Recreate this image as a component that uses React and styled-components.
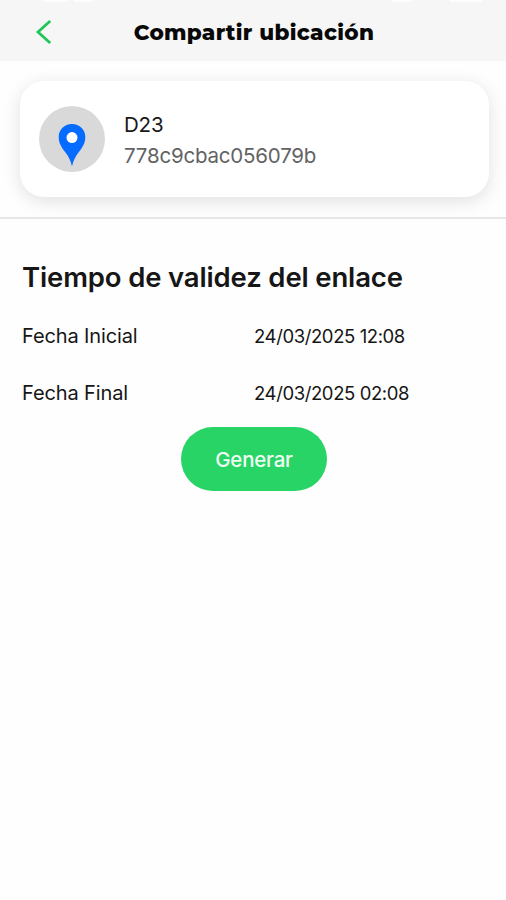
import React from 'react';
import styled, { createGlobalStyle } from 'styled-components';

const GlobalStyle = createGlobalStyle`
  *, *::before, *::after { box-sizing: border-box; }
  body { margin: 0; background: #fefefe; font-family: Inter, "Liberation Sans", sans-serif; }
`;

const Screen = styled.main`
  min-height: 900px;
  display: flex;
  flex-direction: column;
  background: #fefefe;
  color: #161616;
`;

const StatusBar = styled.div`
  display: flex;
  height: 3px;
  padding-left: 43px;
  background: #f6f6f6;
`;

const StatusItem = styled.span`
  width: ${(p) => p.$width}px;
  height: 2px;
  margin-right: ${(p) => p.$gap || 0}px;
  border-radius: 0 0 8px 8px;
  background: #fdfdfd;
`;

const Header = styled.header`
  display: grid;
  grid-template-columns: 87px 1fr 87px;
  align-items: center;
  height: 58px;
  background: #f6f6f6;
`;

const BackButton = styled.button`
  display: flex;
  justify-content: center;
  padding: 0;
  border: 0;
  background: none;
`;

const Title = styled.h1`
  margin: 0;
  padding-left: 2px;
  text-align: center;
  white-space: nowrap;
  font-family: Montserrat, Inter, sans-serif;
  font-size: 21.5px;
  line-height: 28px;
  font-weight: 800;
  letter-spacing: 0.32px;
  color: #080808;
`;

const DeviceSection = styled.section`
  height: 158px;
  padding: 20px 17px 0 20px;
  border-bottom: 2px solid #e7e7e7;
  overflow: hidden;
`;

const DeviceCard = styled.article`
  display: flex;
  align-items: center;
  gap: 19px;
  height: 116px;
  padding-left: 19px;
  border-radius: 24px;
  background: #fff;
  box-shadow: 0 4px 18px rgba(0, 0, 0, 0.12);
`;

const Avatar = styled.div`
  display: flex;
  align-items: center;
  justify-content: center;
  width: 66px;
  height: 66px;
  padding-top: 12px;
  border-radius: 50%;
  background: #d9d9d9;
`;

const DeviceText = styled.div`
  display: flex;
  flex-direction: column;
  padding-top: 1px;
`;

const DeviceLine = styled.span`
  font-size: 20.5px;
  line-height: 31px;
  letter-spacing: -0.2px;
  color: ${(p) => (p.$muted ? '#636363' : '#181818')};
`;

const Form = styled.section`
  display: flex;
  flex-direction: column;
  padding: 41px 22px 0;
`;

const Heading = styled.h2`
  margin: 0;
  font-size: 27.5px;
  line-height: 34px;
  font-weight: 600;
  letter-spacing: -0.15px;
  white-space: nowrap;
`;

const Rows = styled.div`
  padding-top: 13px;
`;

const Row = styled.div`
  display: grid;
  grid-template-columns: 232px 1fr;
  align-items: center;
  height: 57px;
`;

const Label = styled.span`
  font-size: 20px;
  line-height: 26px;
  letter-spacing: -0.12px;
`;

const DateValue = styled.span`
  font-size: 18.5px;
  line-height: 26px;
  letter-spacing: -0.4px;
`;

const GenerateButton = styled.button`
  align-self: center;
  width: 146px;
  height: 64px;
  margin: 6px 0 0 2px;
  padding: 2px 0 0;
  border: 0;
  border-radius: 32px;
  background: #29d466;
  color: #effff3;
  font: 500 20.5px/26px Inter, sans-serif;
  letter-spacing: -0.25px;
`;

function ChevronLeft() {
  return (
    <svg width="18" height="26" viewBox="0 0 18 26" fill="none" aria-hidden="true">
      <path d="M15.2 2 3 13 15.2 24" stroke="#1fc659" strokeWidth="2.8" />
    </svg>
  );
}

function Pin() {
  return (
    <svg width="28" height="43" viewBox="0 0 28 43" aria-hidden="true">
      <path d="M14 0C6.3 0 .7 5.6.7 13c0 6.500 3 10.500 6.800 15.500C10.600 32.500 12.900 37 14 42.500c1.100-5.500 3.400-10 6.500-14 3.800-5 6.800-9 6.800-15.500C27.300 5.600 21.700 0 14 0Z" fill="#066bff" />
      <circle cx="14" cy="13.600" r="5.500" fill="#fff" />
    </svg>
  );
}

export default function App() {
  return (
    <Screen>
      <GlobalStyle />
      <StatusBar>
        <StatusItem $width={25} $gap={5} />
        <StatusItem $width={20} $gap={299} />
        <StatusItem $width={20} $gap={37} />
        <StatusItem $width={34} />
      </StatusBar>
      <Header>
        <BackButton aria-label="Volver"><ChevronLeft /></BackButton>
        <Title>Compartir ubicación</Title>
      </Header>
      <DeviceSection>
        <DeviceCard>
          <Avatar><Pin /></Avatar>
          <DeviceText>
            <DeviceLine>D23</DeviceLine>
            <DeviceLine $muted>778c9cbac056079b</DeviceLine>
          </DeviceText>
        </DeviceCard>
      </DeviceSection>
      <Form>
        <Heading>Tiempo de validez del enlace</Heading>
        <Rows>
          <Row>
            <Label>Fecha Inicial</Label>
            <DateValue>24/03/2025 12:08</DateValue>
          </Row>
          <Row>
            <Label>Fecha Final</Label>
            <DateValue>24/03/2025 02:08</DateValue>
          </Row>
        </Rows>
        <GenerateButton>Generar</GenerateButton>
      </Form>
    </Screen>
  );
}
